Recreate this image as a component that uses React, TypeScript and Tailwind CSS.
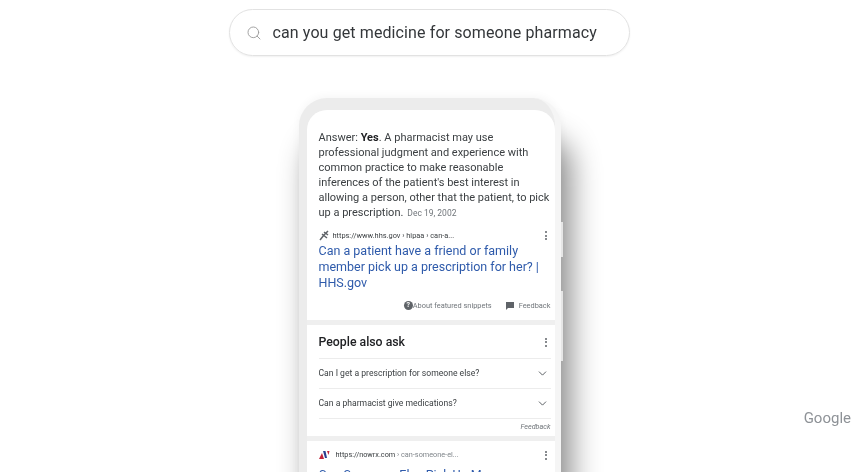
import React from "react";
import { ChevronDown, Search } from "lucide-react";

function Dots({ className = "" }: { className?: string }) {
  return (
    <div className={"flex flex-col gap-[1.5px] items-center w-[3px] " + className}>
      <span className="w-[2px] h-[2px] rounded-full bg-[#5f6368]" />
      <span className="w-[2px] h-[2px] rounded-full bg-[#5f6368]" />
      <span className="w-[2px] h-[2px] rounded-full bg-[#5f6368]" />
    </div>
  );
}

function Question({ text, last }: { text: string; last?: boolean }) {
  return (
    <div className={"flex items-center justify-between border-t border-[#ececec] pr-[2px] " + (last ? "h-[31px] border-b" : "h-[30px]")}>
      <span className="text-[8.6px] text-[#3c4043]">{text}</span>
      <ChevronDown size={13} strokeWidth={1.7} className="text-[#4f5358]" />
    </div>
  );
}

export default function App() {
  return (
    <div
      className="relative w-[858px] h-[474px] overflow-hidden bg-white flex flex-col items-center blur-[0.4px]"
      style={{ fontFamily: "Roboto, 'Liberation Sans', sans-serif" }}
    >
      <div className="mt-[9px] w-[401px] h-[47px] shrink-0 rounded-[24px] border border-[#e2e2e2] shadow-[0_1px_2px_rgba(0,0,0,0.06)] flex items-center pl-[16px]">
        <Search size={16} strokeWidth={1.4} className="text-[#9c9c9c]" />
        <span className="ml-[11px] text-[16px] text-[#34373a] tracking-[0.11px]">
          can you get medicine for someone pharmacy
        </span>
      </div>

      <div className="mt-[32px] w-full h-[384px] shrink-0 overflow-hidden flex justify-center pt-[10px] pl-[1px]">
        <div className="relative w-[262px] h-[400px] shrink-0 rounded-t-[28px] bg-[#ececec] pt-[12px] pl-[8px] border-r-[6px] border-[#f5f5f5] shadow-[10px_40px_30px_rgba(0,0,0,0.45),0_-2px_8px_rgba(0,0,0,0.04)]">
          <span className="absolute right-[-8px] top-[124px] w-[2px] h-[35px] bg-[#e6e6e6]" />
          <span className="absolute right-[-8px] top-[193px] w-[2px] h-[70px] bg-[#e6e6e6]" />
          <div className="h-full rounded-t-[20px] bg-[#efefef] overflow-hidden flex flex-col gap-[5px]">
            <div className="bg-white pl-[12px] pr-[4px] pt-[20px] h-[210px] shrink-0">
              <p className="text-[11px] leading-[15px] text-[#3c4043]">
                Answer: <b className="font-bold text-[#202124]">Yes</b>. A pharmacist may use professional judgment and
                experience with common practice to make reasonable inferences of the patient's best interest in allowing
                a person, other that the patient, to pick up a prescription.
                <span className="ml-[4px] text-[8.5px] text-[#70757a]">Dec 19, 2002</span>
              </p>
              <div className="mt-[8px] flex items-center justify-between pr-[3px] h-[13px]">
                <div className="flex items-center gap-[3px]">
                  <svg width="11" height="11" viewBox="0 0 11 11">
                    <path d="M1 10 L5 5 L9 1 M3 4 L8 8 M5 2 L9 5" stroke="#5f6368" strokeWidth="1.5" fill="none" />
                  </svg>
                  <span className="text-[7.4px] text-[#3c4043]">https://www.hhs.gov › hipaa › can-a...</span>
                </div>
                <Dots />
              </div>
              <a className="block mt-[1px] text-[12.5px] leading-[16px] text-[#2f5bab]">
                Can a patient have a friend or family
                <br />
                member pick up a prescription for her? |
                <br />
                HHS.gov
              </a>
              <div className="mt-[9px] flex items-center justify-end text-[7.4px] text-[#70757a]">
                <span className="w-[9px] h-[9px] rounded-full bg-[#5f6368] text-white text-[7px] leading-[9px] text-center font-bold">
                  ?
                </span>
                <span>About featured snippets</span>
                <svg width="8" height="8" viewBox="0 0 8 8" className="ml-[14px] mr-[5px]">
                  <path d="M0 0H8V6H2L0 8Z" fill="#5f6368" />
                </svg>
                <span>Feedback</span>
              </div>
            </div>

            <div className="bg-white pl-[12px] pr-[4px] h-[111px] shrink-0">
              <div className="h-[33px] flex items-center justify-between pr-[3px] pt-[1px]">
                <span className="text-[12.3px] font-medium text-[#202124]">People also ask</span>
                <Dots />
              </div>
              <Question text="Can I get a prescription for someone else?" />
              <Question text="Can a pharmacist give medications?" last />
              <div className="h-[17px] flex items-center justify-end">
                <i className="text-[7.2px] text-[#70757a]">Feedback</i>
              </div>
            </div>

            <div className="bg-white pl-[12px] pr-[4px] pt-[9px] flex-1">
              <div className="flex items-center justify-between pr-[3px]">
                <div className="flex items-center gap-[6px]">
                  <svg width="11" height="10" viewBox="0 0 11 10">
                    <path d="M0 9 L3 3 L5 9Z" fill="#c2233a" />
                    <path d="M4 1 L6.5 1 L8 8 L6 8Z" fill="#2b3f8f" />
                    <path d="M8 1 L10.5 1 L9.5 5Z" fill="#c2233a" />
                  </svg>
                  <span className="text-[7.3px] text-[#3c4043]">
                    https://nowrx.com <span className="text-[#80868b]">› can-someone-el...</span>
                  </span>
                </div>
                <Dots />
              </div>
              <div className="mt-[6px] text-[12.5px] leading-[16px] text-[#2f5bab]">Can Someone Else Pick Up My</div>
            </div>
          </div>
        </div>
      </div>

      <div className="absolute right-[7px] top-[407px] text-[15px] text-[#8e9297]">Google</div>
    </div>
  );
}
